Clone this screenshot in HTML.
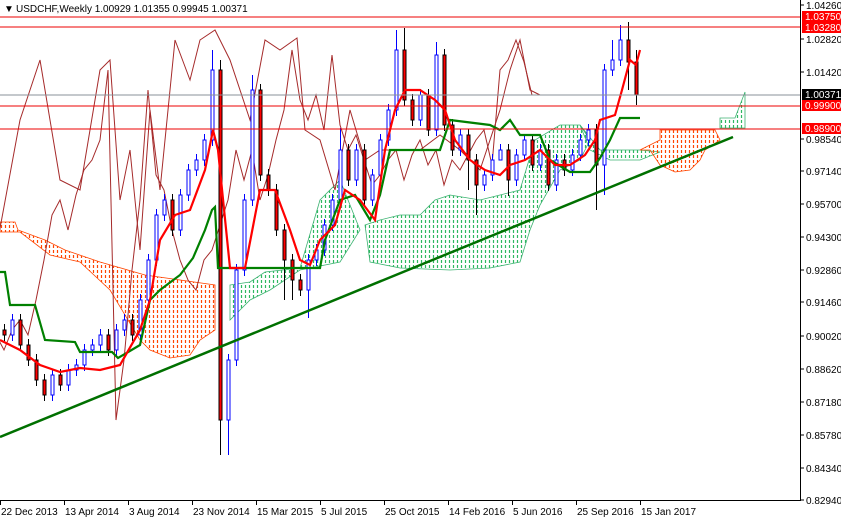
<!DOCTYPE html>
<html><head><meta charset="utf-8"><style>
html,body{margin:0;padding:0;background:#fff;width:841px;height:519px;overflow:hidden;font-family:"Liberation Sans",sans-serif}
svg{position:absolute;left:0;top:0}
text{font-family:"Liberation Sans",sans-serif;font-size:10px}
.t{fill:#000}.w{fill:#fff}
.u{fill:#fff;stroke:#00f}.d{fill:#f00;stroke:#000}
</style></head><body>
<svg width="841" height="519" xmlns="http://www.w3.org/2000/svg">
<defs>
<pattern id="po" x="0" y="0" width="4" height="5" patternUnits="userSpaceOnUse"><path d="M1.5 0V3" stroke="#ff4500" stroke-width="1.2"/></pattern>
<pattern id="pg" x="0" y="0" width="4" height="5" patternUnits="userSpaceOnUse"><path d="M1.5 0V3" stroke="#2eb860" stroke-width="1.2"/></pattern>
<clipPath id="c"><rect x="0" y="0" width="800" height="500"/></clipPath>
</defs>
<g clip-path="url(#c)">
<polygon fill="url(#po)" stroke="#ff4500" stroke-width="0.8" points="0,222 15,222 18,230 45,240 65,250 100,262 145,275 215,285 215,330 200,340 190,355 170,358 150,350 140,340 110,290 80,262 50,255 20,232 0,232"/>
<polygon fill="url(#pg)" stroke="#3cb371" stroke-width="0.8" points="230,285 250,282 265,272 300,268 320,200 340,180 360,230 340,262 300,270 270,290 250,300 230,320"/>
<polygon fill="url(#pg)" stroke="#3cb371" stroke-width="0.8" points="365,225 380,220 400,215 420,215 435,200 450,195 480,200 500,195 520,190 535,140 560,125 580,125 590,140 580,160 560,170 540,205 530,230 520,262 490,268 450,270 400,268 370,262"/>
<polygon fill="url(#pg)" stroke="#3cb371" stroke-width="0.8" points="580,125 600,150 640,150 660,152 640,160 610,160 590,150"/>
<polygon fill="url(#po)" stroke="#ff4500" stroke-width="0.8" points="660,130 700,130 715,130 720,140 705,150 700,160 690,170 675,172 660,165 650,150 640,150 660,140"/>
<polygon fill="url(#pg)" stroke="#3cb371" stroke-width="0.8" points="720,118 735,118 745,92 745,128 720,128"/>
<polyline transform="translate(-104,0)" fill="none" stroke="#a52a2a" stroke-width="1" points="4,335 12,320 20,345 28,360 36,380 44,395 52,375 60,385 68,370 76,365 84,350 92,345 100,335 108,350 116,330 124,320 132,335 140,300 148,260 156,215 164,200 172,230 180,195 188,170 196,160 204,140 212,70 220,420 228,360 236,270 244,200 252,90 260,175 268,190 276,230 284,260 292,280 300,290 308,260 316,250 324,225 332,200 340,150 348,180 356,150 364,200 372,175 380,140 388,110 396,50 404,100 412,120 420,95 428,130 436,55 444,125 452,150 460,135 468,160 476,185 484,175 492,160 500,150 508,180 516,155 524,140 532,165 540,150 548,185 556,160 564,170 572,155 580,140 588,130 596,165 604,70 612,60 620,40 628,62 636,95"/>
<polyline fill="none" stroke="#a52a2a" stroke-width="1" points="-4,250 20,120 40,60 60,180 80,190 100,70 110,60 120,200 130,150 140,250 150,110 160,190 175,40 190,80 200,40 215,30 230,60 250,120 265,40 280,50 297,38 305,130 320,140 335,190 350,110 365,160 380,150 400,150 420,150 440,135 460,150 480,170 500,110 510,70 520,40 530,90 540,95"/>
<g stroke-width="1">
<path stroke="#00f" d="M12.5 314V341M52.5 369V401M68.5 364V391M76.5 359V376M84.5 344V371M92.5 339V356M100.5 329V351M116.5 324V356M124.5 314V336M140.5 294V341M148.5 254V306M156.5 209V266M164.5 194V221M180.5 189V236M188.5 164V201M196.5 154V176M204.5 134V166M212.5 50V146M228.5 354V455M236.5 264V366M244.5 194V276M252.5 75V206M308.5 254V318M316.5 244V266M324.5 219V256M332.5 194V231M340.5 128V206M356.5 144V186M372.5 169V206M380.5 134V181M388.5 104V146M396.5 30V116M420.5 89V126M436.5 42V136M460.5 129V156M484.5 169V191M492.5 154V181M500.5 144V156M516.5 149V186M524.5 134V161M540.5 144V171M556.5 154V191M572.5 149V176M580.5 134V161M588.5 124V146M604.5 64V195M612.5 40V76M620.5 25V66"/>
<path stroke="#000" d="M4.5 324V341M20.5 314V351M28.5 339V366M36.5 354V386M44.5 374V401M60.5 369V391M108.5 329V356M132.5 314V341M172.5 194V236M220.5 60V455M260.5 84V181M268.5 169V196M276.5 184V236M284.5 224V300M292.5 254V300M300.5 274V296M348.5 144V186M364.5 144V206M404.5 28V106M412.5 94V126M428.5 89V136M444.5 49V131M452.5 119V156M468.5 129V190M476.5 154V215M508.5 144V196M532.5 134V171M548.5 144V191M564.5 154V176M596.5 124V210M628.5 22V90M636.5 50V105"/>
<g class="u">
<rect x="11" y="320" width="3" height="15"/><rect x="51" y="375" width="3" height="20"/><rect x="67" y="370" width="3" height="15"/><rect x="75" y="365" width="3" height="5"/><rect x="83" y="350" width="3" height="15"/><rect x="91" y="345" width="3" height="5"/><rect x="99" y="335" width="3" height="10"/><rect x="115" y="330" width="3" height="20"/><rect x="123" y="320" width="3" height="10"/><rect x="139" y="300" width="3" height="35"/><rect x="147" y="260" width="3" height="40"/><rect x="155" y="215" width="3" height="45"/><rect x="163" y="200" width="3" height="15"/><rect x="179" y="195" width="3" height="35"/><rect x="187" y="170" width="3" height="25"/><rect x="195" y="160" width="3" height="10"/><rect x="203" y="140" width="3" height="20"/><rect x="211" y="70" width="3" height="70"/><rect x="227" y="360" width="3" height="60"/><rect x="235" y="270" width="3" height="90"/><rect x="243" y="200" width="3" height="70"/><rect x="251" y="90" width="3" height="110"/><rect x="307" y="260" width="3" height="30"/><rect x="315" y="250" width="3" height="10"/><rect x="323" y="225" width="3" height="25"/><rect x="331" y="200" width="3" height="25"/><rect x="339" y="150" width="3" height="50"/><rect x="355" y="150" width="3" height="30"/><rect x="371" y="175" width="3" height="25"/><rect x="379" y="140" width="3" height="35"/><rect x="387" y="110" width="3" height="30"/><rect x="395" y="50" width="3" height="60"/><rect x="419" y="95" width="3" height="25"/><rect x="435" y="55" width="3" height="75"/><rect x="459" y="135" width="3" height="15"/><rect x="483" y="175" width="3" height="10"/><rect x="491" y="160" width="3" height="15"/><rect x="499" y="150" width="3" height="10"/><rect x="515" y="155" width="3" height="25"/><rect x="523" y="140" width="3" height="15"/><rect x="539" y="150" width="3" height="15"/><rect x="555" y="160" width="3" height="25"/><rect x="571" y="155" width="3" height="15"/><rect x="579" y="140" width="3" height="15"/><rect x="587" y="130" width="3" height="10"/><rect x="603" y="70" width="3" height="95"/><rect x="611" y="60" width="3" height="10"/><rect x="619" y="40" width="3" height="20"/>
</g>
<g class="d">
<rect x="3" y="330" width="3" height="5"/><rect x="19" y="320" width="3" height="25"/><rect x="27" y="345" width="3" height="15"/><rect x="35" y="360" width="3" height="20"/><rect x="43" y="380" width="3" height="15"/><rect x="59" y="375" width="3" height="10"/><rect x="107" y="335" width="3" height="15"/><rect x="131" y="320" width="3" height="15"/><rect x="171" y="200" width="3" height="30"/><rect x="219" y="70" width="3" height="350"/><rect x="259" y="90" width="3" height="85"/><rect x="267" y="175" width="3" height="15"/><rect x="275" y="190" width="3" height="40"/><rect x="283" y="230" width="3" height="30"/><rect x="291" y="260" width="3" height="20"/><rect x="299" y="280" width="3" height="10"/><rect x="347" y="150" width="3" height="30"/><rect x="363" y="150" width="3" height="50"/><rect x="403" y="50" width="3" height="50"/><rect x="411" y="100" width="3" height="20"/><rect x="427" y="95" width="3" height="35"/><rect x="443" y="55" width="3" height="70"/><rect x="451" y="125" width="3" height="25"/><rect x="467" y="135" width="3" height="25"/><rect x="475" y="160" width="3" height="25"/><rect x="507" y="150" width="3" height="30"/><rect x="531" y="140" width="3" height="25"/><rect x="547" y="150" width="3" height="35"/><rect x="563" y="160" width="3" height="10"/><rect x="595" y="130" width="3" height="35"/><rect x="627" y="40" width="3" height="22"/><rect x="635" y="62" width="3" height="33"/>
</g>
</g>
<polyline fill="none" stroke="#008000" stroke-width="2.2" points="0,272 5,272 10,305 35,305 45,340 75,342 80,352 112,352 118,358 140,345 150,300 160,290 180,275 193,258 205,230 212,210 215,207 218,268 320,268 325,240 340,200 355,195 370,220 380,195 390,150 440,150 450,120 490,125 500,130 510,120 520,135 540,135 550,160 570,172 590,172 600,158 610,140 620,118 640,118"/>
<polyline fill="none" stroke="#f00" stroke-width="2.2" points="0,340 20,350 40,365 60,372 80,368 100,370 120,365 140,330 150,300 160,240 175,215 190,210 205,170 213,130 218,150 230,268 245,268 260,190 275,190 290,230 300,260 310,265 320,240 335,225 345,190 360,200 375,220 385,150 395,110 405,90 420,90 435,100 445,110 455,140 470,160 485,170 500,175 510,165 525,160 540,150 555,165 570,165 585,155 595,140 600,120 615,115 622,90 630,60 636,65 640,50"/>
</g>
<line x1="0" y1="17" x2="800" y2="17" stroke="#e00"/>
<line x1="0" y1="27" x2="800" y2="27" stroke="#e00"/>
<line x1="0" y1="95" x2="800" y2="95" stroke="#8a9098"/>
<line x1="0" y1="106" x2="800" y2="106" stroke="#e00"/>
<line x1="0" y1="129" x2="800" y2="129" stroke="#e00"/>
<line x1="0" y1="437" x2="733" y2="137" stroke="#007000" stroke-width="2.5"/>
<line x1="800.5" y1="0" x2="800.5" y2="501" stroke="#000"/>
<line x1="0" y1="500.5" x2="801" y2="500.5" stroke="#000"/>
<g stroke="#000">
<path d="M800 5h4M800 39h4M800 72h4M800 139h4M800 171h4M800 204h4M800 237h4M800 270h4M800 302h4M800 336h4M800 369h4M800 402h4M800 435h4M800 468h4M800 500h4"/>
<path d="M0.5 500v5M64.5 500v5M128.5 500v5M192.5 500v5M256.5 500v5M320.5 500v5M384.5 500v5M448.5 500v5M512.5 500v5M576.5 500v5M640.5 500v5"/>
</g>
<g class="t">
<text x="806" y="9">1.04260</text><text x="806" y="43">1.02820</text><text x="806" y="76">1.01420</text><text x="806" y="143">0.98540</text><text x="806" y="175">0.97140</text><text x="806" y="208">0.95700</text><text x="806" y="241">0.94300</text><text x="806" y="274">0.92860</text><text x="806" y="306">0.91460</text><text x="806" y="340">0.90020</text><text x="806" y="373">0.88620</text><text x="806" y="406">0.87180</text><text x="806" y="439">0.85780</text><text x="806" y="472">0.84340</text><text x="806" y="504">0.82940</text>
<text x="1" y="515">22 Dec 2013</text><text x="65" y="515">13 Apr 2014</text><text x="129" y="515">3 Aug 2014</text><text x="193" y="515">23 Nov 2014</text><text x="257" y="515">15 Mar 2015</text><text x="321" y="515">5 Jul 2015</text><text x="385" y="515">25 Oct 2015</text><text x="449" y="515">14 Feb 2016</text><text x="513" y="515">5 Jun 2016</text><text x="577" y="515">25 Sep 2016</text><text x="641" y="515">15 Jan 2017</text>
<text x="4" y="12" font-size="8">▼</text>
<text x="16" y="12">USDCHF,Weekly  1.00929 1.01355 0.99945 1.00371</text>
</g>
<rect x="802" y="11" width="39" height="11" fill="#f00"/><text x="805" y="20" class="w">1.03750</text>
<rect x="802" y="22" width="39" height="11" fill="#f00"/><text x="805" y="31" class="w">1.03280</text>
<rect x="802" y="89" width="39" height="11" fill="#000"/><text x="805" y="98" class="w">1.00371</text>
<rect x="802" y="100" width="39" height="11" fill="#f00"/><text x="805" y="109" class="w">0.99900</text>
<rect x="802" y="123" width="39" height="11" fill="#f00"/><text x="805" y="132" class="w">0.98900</text>
</svg>
</body></html>
